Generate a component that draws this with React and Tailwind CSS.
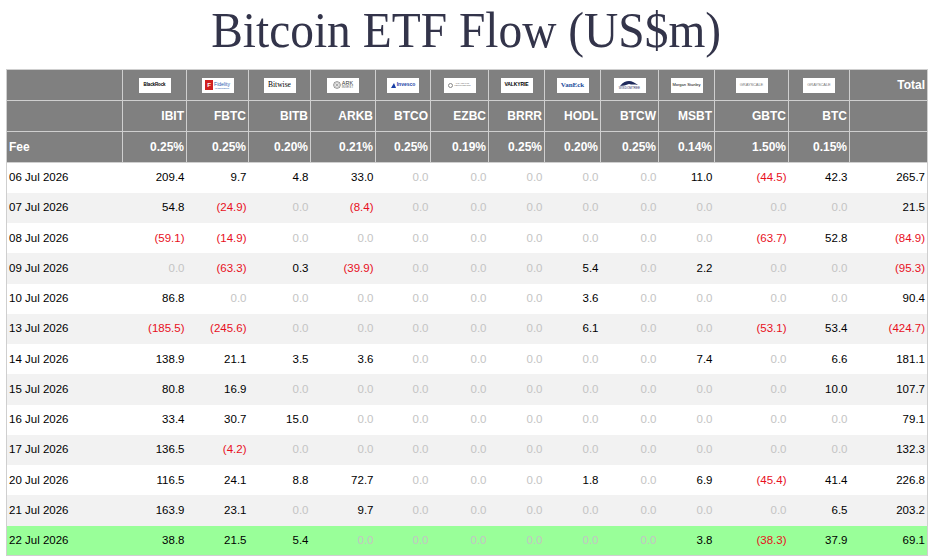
import React from "react";

const cols = [
  { t: "IBIT", fee: "0.25%", w: 64 },
  { t: "FBTC", fee: "0.25%", w: 62 },
  { t: "BITB", fee: "0.20%", w: 62 },
  { t: "ARKB", fee: "0.21%", w: 65 },
  { t: "BTCO", fee: "0.25%", w: 55 },
  { t: "EZBC", fee: "0.19%", w: 58 },
  { t: "BRRR", fee: "0.25%", w: 56 },
  { t: "HODL", fee: "0.20%", w: 56 },
  { t: "BTCW", fee: "0.25%", w: 58 },
  { t: "MSBT", fee: "0.14%", w: 56 },
  { t: "GBTC", fee: "1.50%", w: 74 },
  { t: "BTC", fee: "0.15%", w: 61 },
];

const rows = [
  ["06 Jul 2026", [209.4, 9.7, 4.8, 33.0, 0, 0, 0, 0, 0, 11.0, -44.5, 42.3], 265.7],
  ["07 Jul 2026", [54.8, -24.9, 0, -8.4, 0, 0, 0, 0, 0, 0, 0, 0], 21.5],
  ["08 Jul 2026", [-59.1, -14.9, 0, 0, 0, 0, 0, 0, 0, 0, -63.7, 52.8], -84.9],
  ["09 Jul 2026", [0, -63.3, 0.3, -39.9, 0, 0, 0, 5.4, 0, 2.2, 0, 0], -95.3],
  ["10 Jul 2026", [86.8, 0, 0, 0, 0, 0, 0, 3.6, 0, 0, 0, 0], 90.4],
  ["13 Jul 2026", [-185.5, -245.6, 0, 0, 0, 0, 0, 6.1, 0, 0, -53.1, 53.4], -424.7],
  ["14 Jul 2026", [138.9, 21.1, 3.5, 3.6, 0, 0, 0, 0, 0, 7.4, 0, 6.6], 181.1],
  ["15 Jul 2026", [80.8, 16.9, 0, 0, 0, 0, 0, 0, 0, 0, 0, 10.0], 107.7],
  ["16 Jul 2026", [33.4, 30.7, 15.0, 0, 0, 0, 0, 0, 0, 0, 0, 0], 79.1],
  ["17 Jul 2026", [136.5, -4.2, 0, 0, 0, 0, 0, 0, 0, 0, 0, 0], 132.3],
  ["20 Jul 2026", [116.5, 24.1, 8.8, 72.7, 0, 0, 0, 1.8, 0, 6.9, -45.4, 41.4], 226.8],
  ["21 Jul 2026", [163.9, 23.1, 0, 9.7, 0, 0, 0, 0, 0, 0, 0, 6.5], 203.2],
  ["22 Jul 2026", [38.8, 21.5, 5.4, 0, 0, 0, 0, 0, 0, 3.8, -38.3, 37.9], 69.1],
];

function fmt(v) {
  if (v < 0) return "(" + Math.abs(v).toFixed(1) + ")";
  return v.toFixed(1);
}

function Val({ v, total }) {
  const cls =
    v < 0 ? "text-[#e8101c]" : v === 0 && !total ? "text-[#c4c4c4]" : "text-black";
  return <span className={cls}>{fmt(v)}</span>;
}

function LogoBox({ children, w = 32 }) {
  return (
    <div
      className="mx-auto flex h-[15px] items-center justify-center overflow-hidden bg-white font-normal"
      style={{ width: w }}
    >
      {children}
    </div>
  );
}

const logos = [
  <LogoBox key="br">
    <span className="text-[4.5px] font-bold tracking-tight text-black">BlackRock</span>
  </LogoBox>,
  <LogoBox key="fi">
    <div className="flex items-center gap-[1px]">
      <div className="flex h-[10px] w-[8px] items-center justify-center bg-[#d02020] text-[6px] font-bold text-white">F</div>
      <div className="flex flex-col leading-none">
        <span className="text-[5px] text-[#2a5db0]">Fidelity</span>
        <span className="text-[2px] text-[#2a5db0]">INVESTMENTS</span>
      </div>
    </div>
  </LogoBox>,
  <LogoBox key="bw">
    <span className="text-[7.5px] font-normal text-black" style={{ fontFamily: '"Liberation Serif", serif' }}>Bitwise</span>
  </LogoBox>,
  <LogoBox key="ark">
    <div className="flex items-center gap-[1px]">
      <svg width="8" height="8" viewBox="0 0 10 10">
        <circle cx="5" cy="5" r="4.2" fill="none" stroke="#555" strokeWidth="0.8" />
        <path d="M1 5h8M5 1v8M2 2l6 6M8 2l-6 6" stroke="#777" strokeWidth="0.5" />
      </svg>
      <div className="flex flex-col leading-none">
        <span className="text-[5.5px] text-[#333]">ARK</span>
        <span className="text-[3px] tracking-wider text-[#555]">INVEST</span>
      </div>
    </div>
  </LogoBox>,
  <LogoBox key="inv">
    <div className="flex items-center gap-[1px]">
      <svg width="5" height="5" viewBox="0 0 10 10">
        <path d="M0 10L6 0L10 10Z" fill="#1a3fa6" />
      </svg>
      <span className="text-[5px] font-bold text-[#1a3fa6]">Invesco</span>
    </div>
  </LogoBox>,
  <LogoBox key="ft">
    <div className="flex items-center gap-[1px]">
      <div className="h-[5px] w-[5px] rounded-full border border-[#888]" />
      <div className="flex flex-col leading-none">
        <span className="text-[2.5px] tracking-wider text-[#666]">FRANKLIN</span>
        <span className="text-[2.5px] tracking-wider text-[#666]">TEMPLETON</span>
      </div>
    </div>
  </LogoBox>,
  <LogoBox key="vk">
    <span className="text-[5px] font-bold tracking-tight text-black">VALKYRIE</span>
  </LogoBox>,
  <LogoBox key="ve">
    <span className="text-[7px] font-bold text-[#1d4f9c]" style={{ fontFamily: '"Liberation Serif", serif' }}>VanEck</span>
  </LogoBox>,
  <LogoBox key="wt">
    <div className="flex flex-col items-center leading-none">
      <svg width="18" height="7" viewBox="0 0 18 7">
        <path d="M0 6C3 2 6 1 9 1C12 1 15 3 18 5C14 4 12 5 9 4C6 5 3 6 0 6Z" fill="#1f2a5c" />
      </svg>
      <span className="text-[3px] tracking-wide text-[#1f2a5c]">WISDOMTREE</span>
    </div>
  </LogoBox>,
  <LogoBox key="ms">
    <span className="text-[4px] text-black">Morgan Stanley</span>
  </LogoBox>,
  <LogoBox key="gs1">
    <span className="text-[4px] tracking-tight text-[#777]">GRAYSCALE</span>
  </LogoBox>,
  <LogoBox key="gs2">
    <span className="text-[4px] tracking-tight text-[#777]">GRAYSCALE</span>
  </LogoBox>,
];

const hd = "bg-[#808080] border border-[#cfcfcf] text-white font-bold";

export default function App() {
  return (
    <div
      className="h-[556px] w-[933px] overflow-hidden bg-white"
      style={{ fontFamily: '"Liberation Sans", Arial, sans-serif' }}
    >
      <div className="flex h-[69px] items-start justify-center">
        <div
          className="mt-[-2px] origin-center scale-x-[0.93] text-[51px] leading-[64px] text-[#33344a]"
          style={{ fontFamily: '"Liberation Serif", "Times New Roman", serif' }}
        >
          Bitcoin ETF Flow (US$m)
        </div>
      </div>
      <table className="ml-[6px] w-[921px] table-fixed border-collapse border border-[#cfcfcf] text-[11.5px]">
        <colgroup>
          <col style={{ width: 116 }} />
          {cols.map((c) => (
            <col key={c.t} style={{ width: c.w }} />
          ))}
          <col style={{ width: 78 }} />
        </colgroup>
        <thead>
          <tr className="h-[31px]">
            <th className={hd}></th>
            {logos.map((l, i) => (
              <th key={i} className={hd + " px-0"}>
                {l}
              </th>
            ))}
            <th className={hd + " pr-[2px] text-right text-[12px]"}>Total</th>
          </tr>
          <tr className="h-[31px]">
            <th className={hd}></th>
            {cols.map((c) => (
              <th key={c.t} className={hd + " pr-[2px] text-right text-[12px]"}>
                {c.t}
              </th>
            ))}
            <th className={hd}></th>
          </tr>
          <tr className="h-[31px]">
            <th className={hd + " pl-[2px] text-left text-[12px]"}>Fee</th>
            {cols.map((c) => (
              <th key={c.t} className={hd + " pr-[2px] text-right text-[12px]"}>
                {c.fee}
              </th>
            ))}
            <th className={hd}></th>
          </tr>
        </thead>
        <tbody>
          {rows.map(([d, vals, tot], ri) => {
            const bg =
              ri === rows.length - 1
                ? "bg-[#99ff99]"
                : ri % 2 === 1
                ? "bg-[#f2f2f2]"
                : "bg-white";
            return (
              <tr key={d} className={"h-[30.25px] " + bg}>
                <td className="pl-[2px] text-left text-black">{d}</td>
                {vals.map((v, i) => (
                  <td key={i} className="pr-[2px] text-right">
                    <Val v={v} />
                  </td>
                ))}
                <td className="pr-[2px] text-right">
                  <Val v={tot} total />
                </td>
              </tr>
            );
          })}
        </tbody>
      </table>
    </div>
  );
}
